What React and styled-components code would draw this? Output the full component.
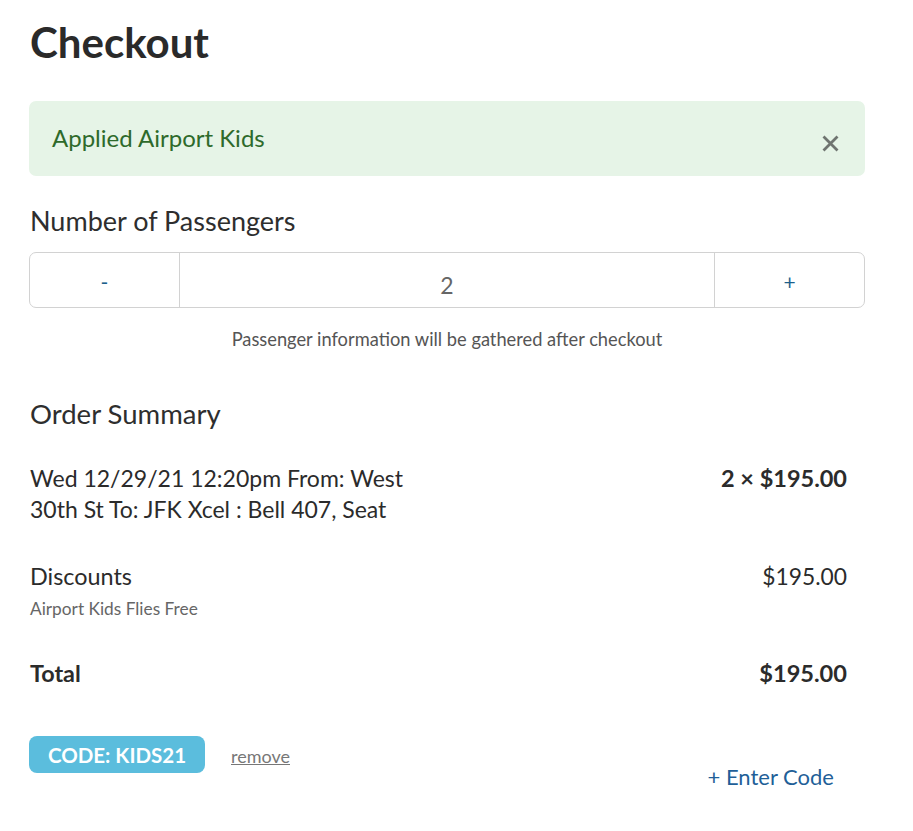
import React from "react";
import styled, { createGlobalStyle } from "styled-components";

const Global = createGlobalStyle`
  html, body { margin: 0; padding: 0; background: #fff; }
  body { font-family: "Lato", "Noto Sans", sans-serif; color: #2b2b2b; }
`;

const Page = styled.div`
  width: 836px;
  padding: 16px 0 0 29px;
  display: flex;
  flex-direction: column;
`;

const Title = styled.h1`
  margin: 0 0 0 1px;
  font-size: 42px;
  font-weight: 700;
  line-height: 52px;
  color: #2a2a2a;
`;

const Alert = styled.div`
  margin-top: 33px;
  height: 75px;
  background: #e6f4e7;
  border-radius: 7px;
  display: flex;
  justify-content: space-between;
  align-items: flex-start;
  padding: 22px 26px 0 23px;
  box-sizing: border-box;
`;

const AlertText = styled.span`
  font-size: 24px;
  line-height: 30px;
  color: #2e6a2b;
`;

const Close = styled.button`
  border: 0;
  background: none;
  padding: 0;
  margin-top: 12px;
  width: 17px;
  height: 17px;
  cursor: pointer;
  display: flex;
`;

const Heading = styled.h2`
  margin: ${(p) => p.$mt}px 0 0 1px;
  font-size: ${(p) => p.$size}px;
  font-weight: 400;
  line-height: 32px;
  color: #2e2e2e;
`;

const Stepper = styled.div`
  margin-top: 15px;
  display: grid;
  grid-template-columns: 149px 1fr 149px;
  height: 56px;
  border: 1px solid #d2d2d2;
  border-radius: 7px;
  box-sizing: border-box;
`;

const StepBtn = styled.button`
  border: 0;
  background: none;
  color: #1d5f8c;
  font-family: inherit;
  font-size: 21px;
  cursor: pointer;
  padding-top: 4px;
`;

const StepValue = styled.div`
  border-left: 1px solid #d2d2d2;
  border-right: 1px solid #d2d2d2;
  border-bottom: 1px solid #d2d2d2;
  margin-bottom: -1px;
  display: flex;
  align-items: center;
  justify-content: center;
  font-size: 23px;
  color: #666;
  padding-top: 9px;
`;

const Note = styled.p`
  margin: 20px 0 0;
  text-align: center;
  font-size: 18.3px;
  line-height: 22px;
  color: #555;
`;

const Row = styled.div`
  margin-top: ${(p) => p.$mt}px;
  display: flex;
  justify-content: space-between;
  align-items: flex-start;
  padding-right: 18px;
`;

const ItemText = styled.div`
  font-size: ${(p) => p.$size}px;
  line-height: 31px;
  max-width: 385px;
  color: #2b2b2b;
  padding-left: 1px;
  font-weight: ${(p) => (p.$bold ? 700 : 400)};
`;

const Amount = styled.div`
  font-size: ${(p) => p.$size}px;
  line-height: 31px;
  font-weight: ${(p) => p.$weight};
  color: #2b2b2b;
`;

const SubText = styled.div`
  font-size: 17.3px;
  line-height: 22px;
  color: #666;
  padding-left: 1px;
  margin-top: 6px;
`;

const CodeRow = styled.div`
  margin-top: 47px;
  display: flex;
  align-items: flex-start;
  justify-content: space-between;
  padding-right: 31px;
`;

const CodeLeft = styled.div`
  display: flex;
  align-items: center;
  gap: 26px;
`;

const Badge = styled.span`
  background: #5bbddd;
  color: #fff;
  font-weight: 700;
  font-size: 20.5px;
  border-radius: 8px;
  height: 37px;
  width: 176px;
  display: flex;
  align-items: center;
  justify-content: center;
  box-sizing: border-box;
`;

const Remove = styled.a`
  font-size: 18px;
  color: #777;
  text-decoration: underline;
  cursor: pointer;
  padding-top: 3px;
`;

const EnterCode = styled.a`
  margin-top: 27.5px;
  font-size: 22px;
  line-height: 26px;
  color: #1f5f98;
  cursor: pointer;
`;

export default function App() {
  return (
    <>
      <Global />
      <Page>
        <Title>Checkout</Title>
        <Alert>
          <AlertText>Applied Airport Kids</AlertText>
          <Close aria-label="close">
            <svg width="17" height="17" viewBox="0 0 17 17">
              <path d="M1.5 1.5L15.5 15.5M15.5 1.5L1.5 15.5" stroke="#6f7470" strokeWidth="2.8" />
            </svg>
          </Close>
        </Alert>
        <Heading $mt={29} $size={27}>Number of Passengers</Heading>
        <Stepper>
          <StepBtn>-</StepBtn>
          <StepValue>2</StepValue>
          <StepBtn>+</StepBtn>
        </Stepper>
        <Note>Passenger information will be gathered after checkout</Note>
        <Heading $mt={48} $size={27.5}>Order Summary</Heading>
        <Row $mt={33}>
          <ItemText $size={23}>Wed 12/29/21 12:20pm From: West 30th St To: JFK Xcel : Bell 407, Seat</ItemText>
          <Amount $size={23.5} $weight={700}>2 × $195.00</Amount>
        </Row>
        <Row $mt={36}>
          <div>
            <ItemText $size={23.4}>Discounts</ItemText>
            <SubText>Airport Kids Flies Free</SubText>
          </div>
          <Amount $size={22.8} $weight={400}>$195.00</Amount>
        </Row>
        <Row $mt={38}>
          <ItemText $size={23.4} $bold>Total</ItemText>
          <Amount $size={23.6} $weight={700}>$195.00</Amount>
        </Row>
        <CodeRow>
          <CodeLeft>
            <Badge>CODE: KIDS21</Badge>
            <Remove>remove</Remove>
          </CodeLeft>
          <EnterCode>+ Enter Code</EnterCode>
        </CodeRow>
      </Page>
    </>
  );
}
